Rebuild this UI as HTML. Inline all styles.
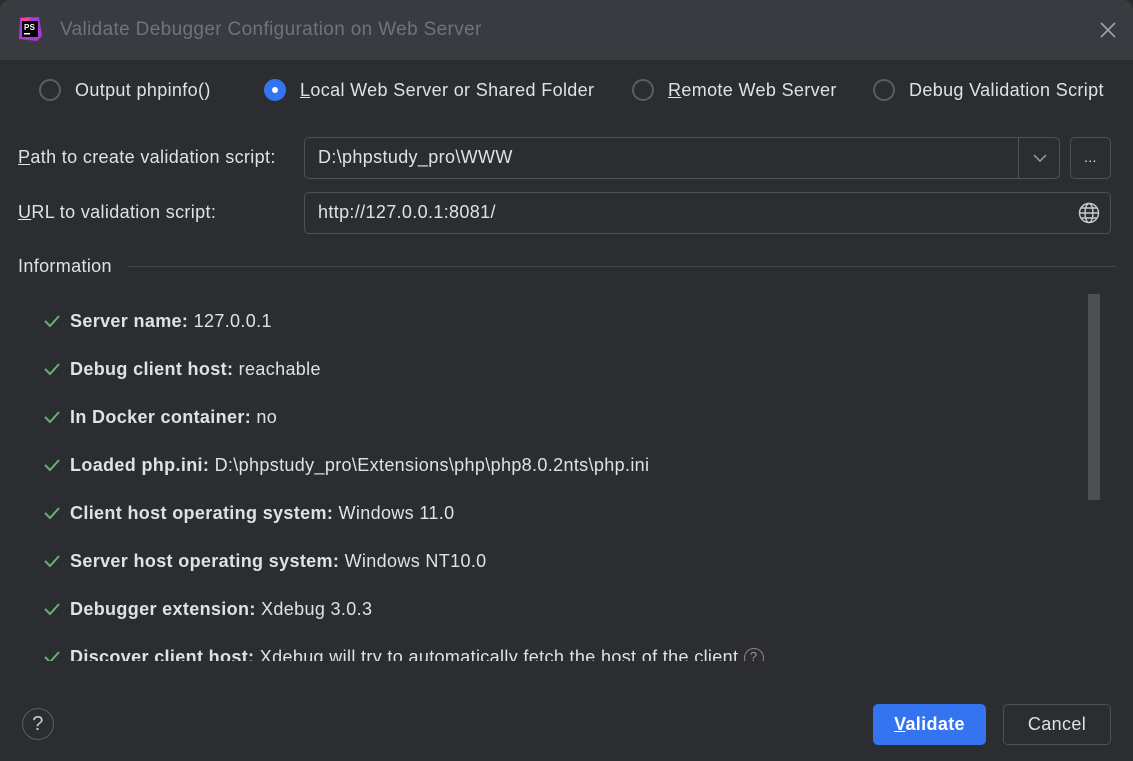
<!DOCTYPE html>
<html><head><style>
body{margin:0;width:1133px;height:761px;background:#2b2d30;font-family:"Liberation Sans",sans-serif;color:#dfe1e5;overflow:hidden;position:relative;font-size:18px;letter-spacing:0.35px}
.a{position:absolute;white-space:nowrap}
.title{position:absolute;left:0;top:0;width:1133px;height:60px;background:#393b40;border-radius:10px 10px 0 0}
.radio{position:absolute;width:22px;height:22px;border:2px solid #5a5d63;border-radius:50%;box-sizing:border-box}
.radio.on{background:#3574f0;border-color:#3574f0}
.radio.on::after{content:"";position:absolute;left:6px;top:6px;width:6px;height:6px;background:#fff;border-radius:50%}
.field{position:absolute;border:1px solid #4e5157;border-radius:5px;box-sizing:border-box}
.row{position:absolute;left:44px;white-space:nowrap}
.row b{font-weight:bold}
.chk{display:inline-block;width:16px;height:12px;margin-right:10px}
</style></head><body>
<div class="title"></div>
<svg class="a" style="left:17px;top:16px" width="26" height="26" viewBox="0 0 26 26"><path d="M3 2 L22 1 L25 20 L20 25 L2 23Z" fill="#a63bd6"/><path d="M3 2 L14 1 L8 10Z" fill="#ff3da8"/><rect x="5" y="5" width="16" height="16" fill="#000"/><text x="7" y="14" font-size="8" font-weight="bold" fill="#fff" font-family="Liberation Sans">PS</text><rect x="7" y="17" width="6" height="1.5" fill="#fff"/></svg>
<div class="a" style="left:60px;top:19px;font-size:19px;color:#6f737a">Validate Debugger Configuration on Web Server</div>
<svg class="a" style="left:1100px;top:22px" width="16" height="16"><path d="M1 1L15 15M15 1L1 15" stroke="#a0a3a8" stroke-width="1.6"/></svg>

<div class="radio" style="left:39px;top:79px"></div><div class="a" style="left:75px;top:80px">Output phpinfo()</div>
<div class="radio on" style="left:264px;top:79px"></div><div class="a" style="left:300px;top:80px"><u>L</u>ocal Web Server or Shared Folder</div>
<div class="radio" style="left:632px;top:79px"></div><div class="a" style="left:668px;top:80px"><u>R</u>emote Web Server</div>
<div class="radio" style="left:873px;top:79px"></div><div class="a" style="left:909px;top:80px">Debug Validation Script</div>

<div class="a" style="left:18px;top:147px"><u>P</u>ath to create validation script:</div>
<div class="field" style="left:304px;top:137px;width:756px;height:42px"></div>
<div class="a" style="left:1018px;top:138px;width:1px;height:40px;background:#4e5157"></div>
<svg class="a" style="left:1033px;top:153px" width="14" height="10"><path d="M1 2L7 8L13 2" stroke="#a0a3a8" stroke-width="1.4" fill="none"/></svg>
<div class="a" style="left:318px;top:147px">D:\phpstudy_pro\WWW</div>
<div class="field" style="left:1070px;top:137px;width:41px;height:42px"></div>
<div class="a" style="left:1084px;top:149px;font-size:14px">...</div>

<div class="a" style="left:18px;top:202px"><u>U</u>RL to validation script:</div>
<div class="field" style="left:304px;top:192px;width:807px;height:42px"></div>
<div class="a" style="left:318px;top:202px">http://127.0.0.1:8081/</div>
<svg class="a" style="left:1078px;top:202px" width="22" height="22" viewBox="0 0 22 22" fill="none" stroke="#c8cacd" stroke-width="1.4"><circle cx="11" cy="11" r="9.5"/><ellipse cx="11" cy="11" rx="4" ry="9.5"/><path d="M1.5 11H20.5M3 6H19M3 16H19"/></svg>

<div class="a" style="left:18px;top:256px">Information</div>
<div class="a" style="left:127px;top:266px;width:989px;height:1px;background:#43454a"></div>

<div class="a" style="left:0;top:290px;width:1080px;height:371px;overflow:hidden">
<div class="row" style="top:21px"><svg class="chk" viewBox="0 0 16 12"><path d="M1 6L6 11L15 1" stroke="#5fb865" stroke-width="2" fill="none"/></svg><b>Server name:</b> 127.0.0.1</div>
<div class="row" style="top:69px"><svg class="chk" viewBox="0 0 16 12"><path d="M1 6L6 11L15 1" stroke="#5fb865" stroke-width="2" fill="none"/></svg><b>Debug client host:</b> reachable</div>
<div class="row" style="top:117px"><svg class="chk" viewBox="0 0 16 12"><path d="M1 6L6 11L15 1" stroke="#5fb865" stroke-width="2" fill="none"/></svg><b>In Docker container:</b> no</div>
<div class="row" style="top:165px"><svg class="chk" viewBox="0 0 16 12"><path d="M1 6L6 11L15 1" stroke="#5fb865" stroke-width="2" fill="none"/></svg><b>Loaded php.ini:</b> D:\phpstudy_pro\Extensions\php\php8.0.2nts\php.ini</div>
<div class="row" style="top:213px"><svg class="chk" viewBox="0 0 16 12"><path d="M1 6L6 11L15 1" stroke="#5fb865" stroke-width="2" fill="none"/></svg><b>Client host operating system:</b> Windows 11.0</div>
<div class="row" style="top:261px"><svg class="chk" viewBox="0 0 16 12"><path d="M1 6L6 11L15 1" stroke="#5fb865" stroke-width="2" fill="none"/></svg><b>Server host operating system:</b> Windows NT10.0</div>
<div class="row" style="top:309px"><svg class="chk" viewBox="0 0 16 12"><path d="M1 6L6 11L15 1" stroke="#5fb865" stroke-width="2" fill="none"/></svg><b>Debugger extension:</b> Xdebug 3.0.3</div>
<div class="row" style="top:357px"><svg class="chk" viewBox="0 0 16 12"><path d="M1 6L6 11L15 1" stroke="#5fb865" stroke-width="2" fill="none"/></svg><b>Discover client host:</b> Xdebug will try to automatically fetch the host of the client <span style="display:inline-block;width:18px;height:18px;border:1px solid #888;border-radius:50%;font-size:13px;text-align:center;color:#999;vertical-align:middle">?</span></div>
</div>
<div class="a" style="left:1088px;top:294px;width:12px;height:206px;background:#4d4f53"></div>

<div class="a" style="left:22px;top:708px;width:32px;height:32px;border:1px solid #5a5d63;border-radius:50%;box-sizing:border-box;text-align:center;line-height:30px;font-size:20px;color:#c8cacd">?</div>
<div class="a" style="left:873px;top:704px;width:113px;height:41px;background:#3574f0;border-radius:5px;color:#fff;font-weight:bold;text-align:center;line-height:41px"><u>V</u>alidate</div>
<div class="a" style="left:1003px;top:704px;width:108px;height:41px;border:1px solid #4e5157;border-radius:5px;box-sizing:border-box;text-align:center;line-height:39px">Cancel</div>
</body></html>
